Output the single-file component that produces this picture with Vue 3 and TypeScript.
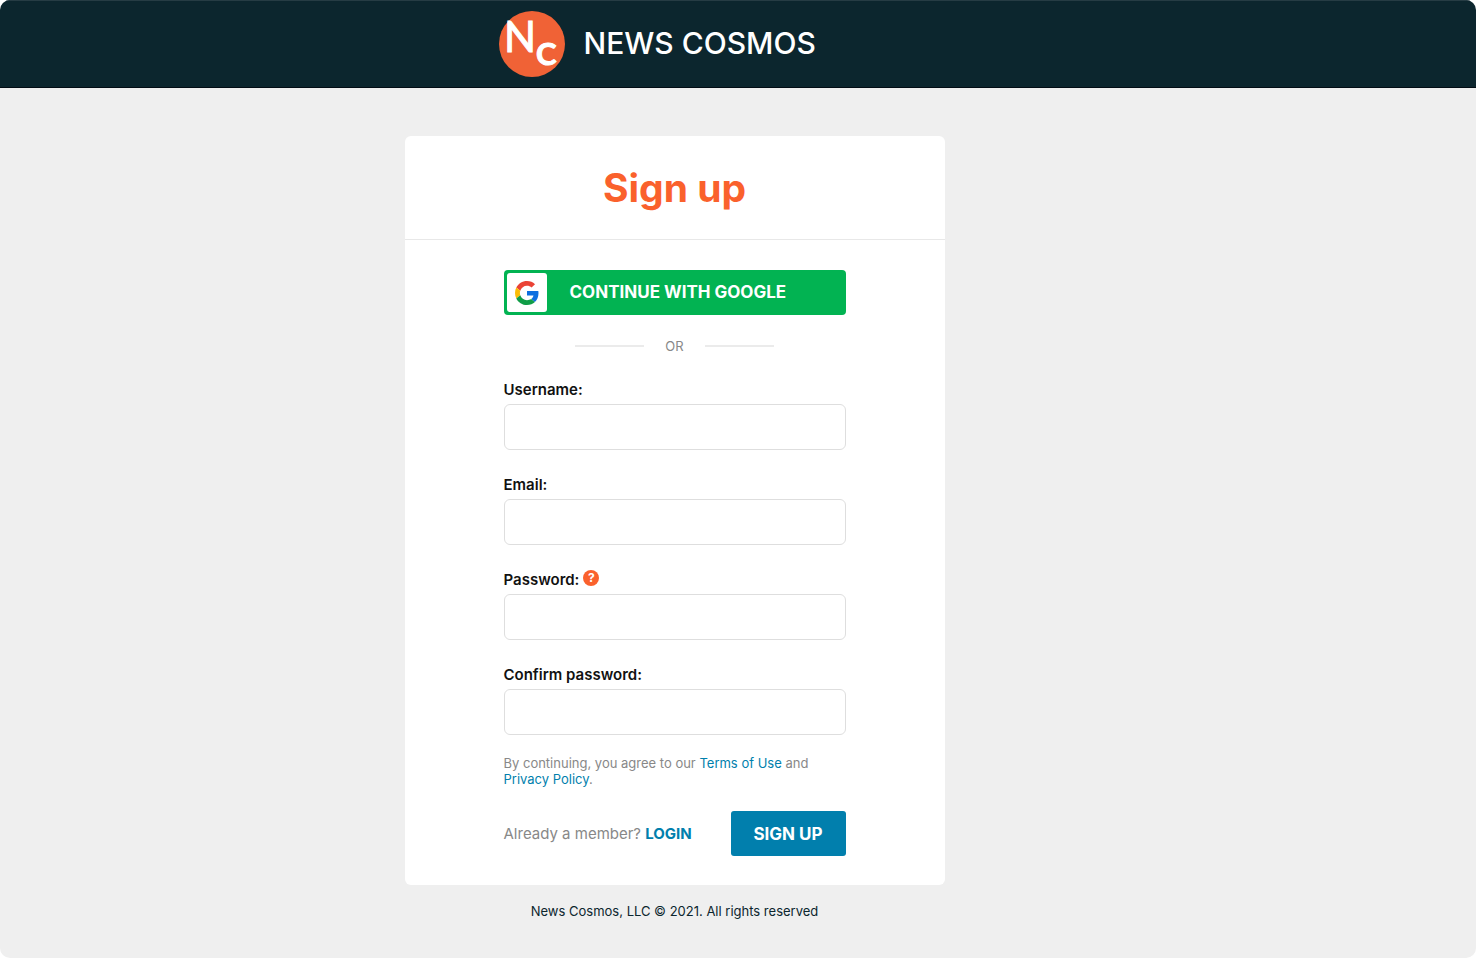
<script setup lang="ts">
import { reactive } from 'vue'

interface Field {
  id: 'username' | 'email' | 'password' | 'confirm'
  label: string
  type: string
  help?: boolean
}

const fields: Field[] = [
  { id: 'username', label: 'Username:', type: 'text' },
  { id: 'email', label: 'Email:', type: 'email' },
  { id: 'password', label: 'Password:', type: 'password', help: true },
  { id: 'confirm', label: 'Confirm password:', type: 'password' },
]

const form = reactive({ username: '', email: '', password: '', confirm: '' })
</script>

<template>
  <div class="page">
    <header class="topbar">
      <div class="brand">
        <svg class="logo" viewBox="0 0 66 66" aria-hidden="true">
          <circle cx="33" cy="33" r="33" fill="#f06236" />
          <text class="logo-n" x="5" y="41">N</text>
          <text class="logo-c" x="37" y="54">C</text>
        </svg>
        <span class="brand-name">NEWS COSMOS</span>
      </div>
    </header>

    <main class="content">
      <section class="card">
        <h1 class="title">Sign up</h1>
        <form class="form" @submit.prevent>
          <button class="google" type="button">
            <span class="google-tile">
              <svg class="google-icon" viewBox="0 0 48 48" aria-hidden="true">
                <path fill="#EA4335" d="M24 9.5c3.54 0 6.71 1.22 9.21 3.6l6.85-6.85C35.9 2.38 30.47 0 24 0 14.62 0 6.51 5.38 2.56 13.22l7.98 6.19C12.43 13.72 17.74 9.5 24 9.5z" />
                <path fill="#0d6fe0" d="M46.98 24.55c0-1.57-.15-3.09-.38-4.55H24v9.02h12.94c-.58 2.96-2.26 5.48-4.78 7.18l7.73 6c4.51-4.18 7.09-10.36 7.09-17.65z" />
                <path fill="#FBBC05" d="M10.53 28.59c-.48-1.45-.76-2.99-.76-4.59s.27-3.14.76-4.59l-7.98-6.19C.92 16.46 0 20.12 0 24c0 3.88.92 7.54 2.56 10.78l7.97-6.19z" />
                <path fill="#109d47" d="M24 48c6.48 0 11.93-2.13 15.89-5.81l-7.73-6c-2.15 1.45-4.92 2.3-8.16 2.3-6.26 0-11.57-4.22-13.47-9.91l-7.98 6.19C6.51 42.62 14.62 48 24 48z" />
              </svg>
            </span>
            <span class="google-label">CONTINUE WITH GOOGLE</span>
          </button>

          <div class="divider"><span>OR</span></div>

          <div v-for="field in fields" :key="field.id" class="field">
            <div class="label-row">
              <label :for="field.id">{{ field.label }}</label>
              <button v-if="field.help" class="help" type="button" aria-label="Password help">?</button>
            </div>
            <input :id="field.id" v-model="form[field.id]" :type="field.type" />
          </div>

          <p class="terms">
            By continuing, you agree to our <a href="#terms">Terms of Use</a> and
            <a href="#privacy">Privacy Policy</a>.
          </p>

          <div class="actions">
            <span class="member">Already a member? <a href="#login">LOGIN</a></span>
            <button class="submit" type="submit">SIGN UP</button>
          </div>
        </form>
      </section>
      <footer class="footer">News Cosmos, LLC © 2021. All rights reserved</footer>
    </main>
  </div>
</template>

<style>
html,
body {
  background: #fff;
}
</style>

<style scoped>
.page {
  --shift: 127px;
  min-height: 100vh;
  box-sizing: border-box;
  border-radius: 10px;
  overflow: hidden;
  background: #efefef;
  font-family: Inter, "Liberation Sans", sans-serif;
  color: #111;
}
.topbar {
  box-sizing: border-box;
  height: 88px;
  padding-right: var(--shift);
  background: #0c262e;
  border-top: 1px solid #263c44;
  border-bottom: 1px solid #020c14;
  display: flex;
  justify-content: center;
  align-items: center;
}
.brand {
  box-sizing: border-box;
  width: 100%;
  max-width: 540px;
  padding-left: 94px;
  display: flex;
  align-items: center;
  gap: 19px;
}
.logo {
  width: 66px;
  height: 66px;
  flex: none;
}
.logo-n,
.logo-c {
  font-family: Lato, sans-serif;
  fill: #fff;
}
.logo-n {
  font-size: 42px;
  stroke: #fff;
  stroke-width: 1px;
}
.logo-c {
  font-size: 31px;
  font-weight: 700;
  stroke: #fff;
  stroke-width: 1px;
}
.brand-name {
  padding-bottom: 2px;
  font-size: 30px;
  font-weight: 500;
  line-height: 36px;
  color: #fff;
  white-space: nowrap;
}
.content {
  padding: 48px var(--shift) 24px 0;
  display: flex;
  flex-direction: column;
  align-items: center;
}
.card {
  width: 100%;
  max-width: 540px;
  background: #fff;
  border-radius: 6px;
}
.title {
  margin: 0;
  padding: 28px 0 27px;
  border-bottom: 1px solid #e8e8e8;
  text-align: center;
  font-size: 39px;
  font-weight: 700;
  line-height: 48px;
  color: #fa612c;
}
.form {
  max-width: 342px;
  margin: 0 auto;
  padding: 30px 0 29px;
}
.google {
  width: 100%;
  height: 45px;
  padding: 0 3px;
  border: 0;
  border-radius: 4px;
  background: #02b352;
  color: #fff;
  font: 700 17px/22px Inter, sans-serif;
  display: flex;
  align-items: center;
  gap: 23px;
  cursor: pointer;
}
.google-tile {
  width: 40px;
  height: 39px;
  border-radius: 3px;
  background: #fff;
  display: flex;
  align-items: center;
  justify-content: center;
}
.google-icon {
  width: 24px;
  height: 24px;
}
.google-label {
  padding-bottom: 2px;
}
.divider {
  display: flex;
  justify-content: center;
  align-items: center;
  gap: 21px;
  margin: 20px 0 23px;
  font-size: 13px;
  line-height: 22px;
  color: #888;
}
.divider::before,
.divider::after {
  content: "";
  width: 69px;
  height: 2px;
  background: #ebebeb;
}
.field {
  margin-bottom: 25px;
}
.label-row {
  height: 19px;
  margin-bottom: 5px;
  display: flex;
  align-items: flex-start;
  gap: 4px;
  font-size: 15px;
  font-weight: 600;
  line-height: 19px;
}
.help {
  width: 16px;
  height: 16px;
  padding: 0;
  border: 0;
  border-radius: 50%;
  background: #fa612c;
  color: #fff;
  font: 700 12px/16px Inter, sans-serif;
  cursor: pointer;
}
.field input {
  box-sizing: border-box;
  display: block;
  width: 100%;
  height: 46px;
  padding: 0 12px;
  border: 1px solid #dedede;
  border-radius: 6px;
  background: #fff;
  font: 16px/22px Inter, sans-serif;
}
.terms {
  margin: -5px 0 24px;
  font-size: 13px;
  line-height: 16px;
  color: #888;
}
a {
  color: #017fad;
  text-decoration: none;
}
.actions {
  display: flex;
  justify-content: space-between;
  align-items: center;
}
.member {
  font-size: 15px;
  line-height: 20px;
  color: #888;
}
.member a {
  font-weight: 700;
}
.submit {
  height: 45px;
  width: 115px;
  padding: 0;
  border: 0;
  border-radius: 3px;
  background: #017fad;
  color: #fff;
  font: 700 17px/22px Inter, sans-serif;
  cursor: pointer;
}
.footer {
  margin-top: 16px;
  font-size: 13px;
  line-height: 20px;
  color: #0c262e;
}
</style>
